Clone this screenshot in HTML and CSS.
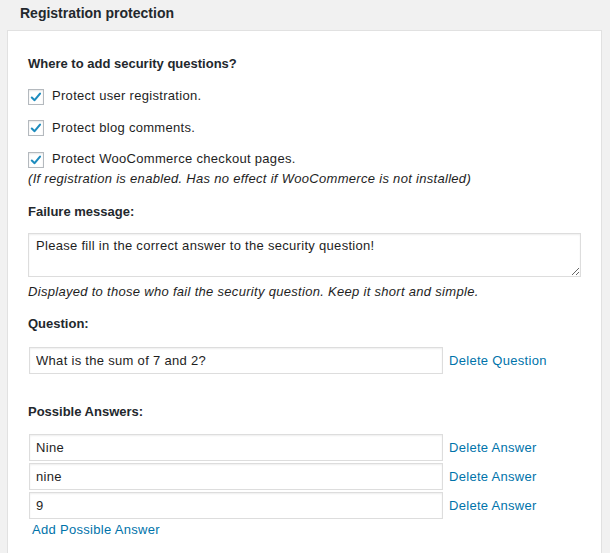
FILE: index.html
```html
<!DOCTYPE html>
<html lang="en">
<head>
<meta charset="utf-8">
<title>Registration protection</title>
<link rel="stylesheet" href="styles.css">
</head>
<body>
<h2 class="title">Registration protection</h2>
<div class="panel">
  <h3 class="label first">Where to add security questions?</h3>
  <div class="checks">
    <label class="check"><span class="box"><svg width="16" height="16" viewBox="0 0 16 16"><path d="M3.2 8.6 L6.4 11.6 L12.6 4.2" fill="none" stroke="#1e8cbe" stroke-width="2.4" stroke-linecap="round" stroke-linejoin="round"/></svg></span>Protect user registration.</label>
    <label class="check"><span class="box"><svg width="16" height="16" viewBox="0 0 16 16"><path d="M3.2 8.6 L6.4 11.6 L12.6 4.2" fill="none" stroke="#1e8cbe" stroke-width="2.4" stroke-linecap="round" stroke-linejoin="round"/></svg></span>Protect blog comments.</label>
    <label class="check"><span class="box"><svg width="16" height="16" viewBox="0 0 16 16"><path d="M3.2 8.6 L6.4 11.6 L12.6 4.2" fill="none" stroke="#1e8cbe" stroke-width="2.4" stroke-linecap="round" stroke-linejoin="round"/></svg></span>Protect WooCommerce checkout pages.</label>
  </div>
  <p class="note">(If registration is enabled. Has no effect if WooCommerce is not installed)</p>

  <h3 class="label failure">Failure message:</h3>
  <textarea class="message">Please fill in the correct answer to the security question!</textarea>
  <p class="desc">Displayed to those who fail the security question. Keep it short and simple.</p>

  <h3 class="label question">Question:</h3>
  <div class="row qrow">
    <input class="field" type="text" value="What is the sum of 7 and 2?">
    <a class="link" href="#">Delete Question</a>
  </div>

  <h3 class="label answers">Possible Answers:</h3>
  <div class="answer-list">
    <div class="row">
      <input class="field" type="text" value="Nine">
      <a class="link" href="#">Delete Answer</a>
    </div>
    <div class="row">
      <input class="field" type="text" value="nine">
      <a class="link" href="#">Delete Answer</a>
    </div>
    <div class="row">
      <input class="field" type="text" value="9">
      <a class="link" href="#">Delete Answer</a>
    </div>
  </div>
  <a class="link add" href="#">Add Possible Answer</a>
</div>
</body>
</html>
```
FILE: styles.css
```css
* { box-sizing: border-box; }

html, body {
  margin: 0;
  background: #f1f1f1;
}

body {
  font-family: "Liberation Sans", Arial, sans-serif;
  font-size: 13px;
  color: #1e1e1e;
  letter-spacing: 0.3px;
}

.title {
  margin: 0;
  padding: 3px 20px 7px;
  font-size: 14px;
  line-height: 20px;
  font-weight: 700;
  letter-spacing: 0;
  color: #23282d;
}

.panel {
  margin: 0 8px 0 7px;
  background: #fff;
  border: 1px solid #e1e1e1;
  border-bottom: none;
  padding: 23px 20px 14px 20px;
  display: flex;
  flex-direction: column;
  align-items: flex-start;
}

.label {
  margin: 0;
  font-size: 13px;
  line-height: 20px;
  font-weight: 700;
  letter-spacing: 0;
  color: #23282d;
}

.checks {
  margin-top: 12px;
  display: flex;
  flex-direction: column;
  gap: 11.5px;
}

.check {
  display: flex;
  align-items: center;
  height: 20px;
  line-height: 20px;
  gap: 8px;
}

.box {
  width: 16px;
  height: 16px;
  border: 1px solid #b4b9be;
  background: #fff;
  box-shadow: inset 0 1px 2px rgba(0,0,0,0.1);
  display: flex;
  align-items: center;
  justify-content: center;
  margin-top: 1px;
}

.box svg {
  display: block;
  width: 14px;
  height: 14px;
}

.note {
  margin: 1px 0 0;
  font-style: italic;
  line-height: 18px;
}

.failure { margin-top: 14px; }

.message {
  display: block;
  margin-top: 11px;
  width: 553px;
  height: 44px;
  border: 1px solid #ddd;
  box-shadow: inset 0 1px 2px rgba(0,0,0,0.07);
  padding: 3px 7px;
  font-family: "Liberation Sans", Arial, sans-serif;
  font-size: 13px;
  line-height: 18px;
  letter-spacing: 0.3px;
  color: #1e1e1e;
  resize: vertical;
  background: #fff;
}

.desc {
  margin: 5px 0 0;
  font-style: italic;
  line-height: 20px;
}

.question { margin-top: 12px; }

.row {
  display: flex;
  align-items: center;
  gap: 6px;
  margin-left: 1px;
}

.qrow { margin-top: 13px; }

.field {
  width: 414px;
  height: 27px;
  border: 1px solid #ddd;
  box-shadow: inset 0 1px 2px rgba(0,0,0,0.07);
  padding: 0 6px;
  font-family: "Liberation Sans", Arial, sans-serif;
  font-size: 13px;
  letter-spacing: 0.3px;
  color: #1e1e1e;
  background: #fff;
  margin: 0;
}

.link {
  color: #0073aa;
  text-decoration: none;
  line-height: 20px;
}

.answers { margin-top: 28px; }

.answer-list {
  margin-top: 12px;
  display: flex;
  flex-direction: column;
  gap: 2px;
}

.add {
  margin-left: 4px;
  margin-top: 1px;
}
```
